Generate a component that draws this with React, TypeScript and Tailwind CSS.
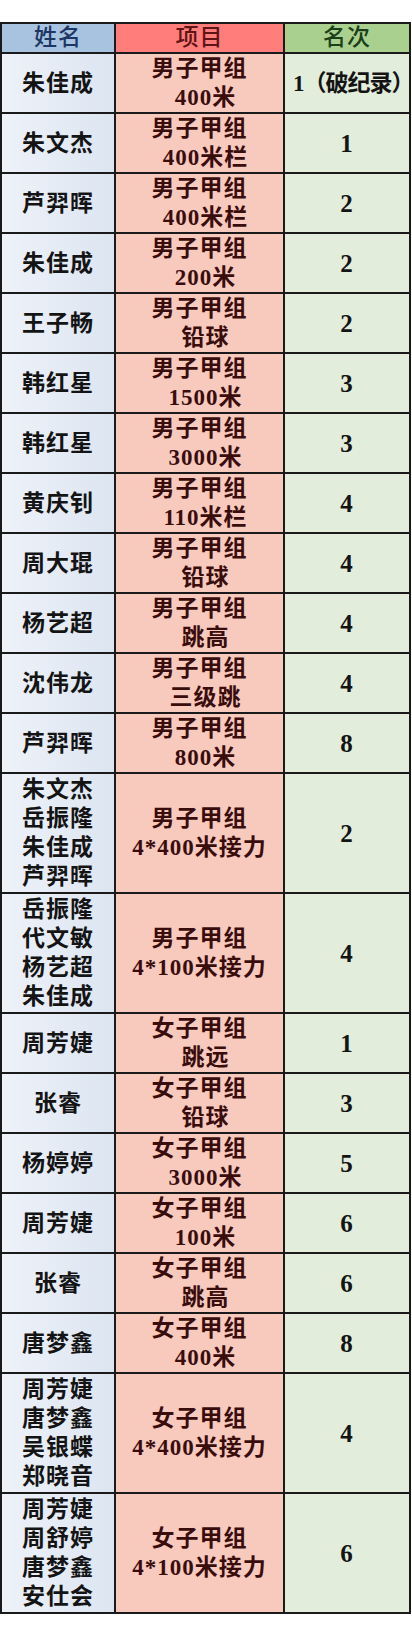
type Row = { names: string[]; group: string; event: string; rank: string };

const rows: Row[] = [
  { names: ['朱佳成'], group: '男子甲组', event: '400米', rank: '1（破纪录）' },
  { names: ['朱文杰'], group: '男子甲组', event: '400米栏', rank: '1' },
  { names: ['芦羿晖'], group: '男子甲组', event: '400米栏', rank: '2' },
  { names: ['朱佳成'], group: '男子甲组', event: '200米', rank: '2' },
  { names: ['王子畅'], group: '男子甲组', event: '铅球', rank: '2' },
  { names: ['韩红星'], group: '男子甲组', event: '1500米', rank: '3' },
  { names: ['韩红星'], group: '男子甲组', event: '3000米', rank: '3' },
  { names: ['黄庆钊'], group: '男子甲组', event: '110米栏', rank: '4' },
  { names: ['周大琨'], group: '男子甲组', event: '铅球', rank: '4' },
  { names: ['杨艺超'], group: '男子甲组', event: '跳高', rank: '4' },
  { names: ['沈伟龙'], group: '男子甲组', event: '三级跳', rank: '4' },
  { names: ['芦羿晖'], group: '男子甲组', event: '800米', rank: '8' },
  { names: ['朱文杰', '岳振隆', '朱佳成', '芦羿晖'], group: '男子甲组', event: '4*400米接力', rank: '2' },
  { names: ['岳振隆', '代文敏', '杨艺超', '朱佳成'], group: '男子甲组', event: '4*100米接力', rank: '4' },
  { names: ['周芳婕'], group: '女子甲组', event: '跳远', rank: '1' },
  { names: ['张睿'], group: '女子甲组', event: '铅球', rank: '3' },
  { names: ['杨婷婷'], group: '女子甲组', event: '3000米', rank: '5' },
  { names: ['周芳婕'], group: '女子甲组', event: '100米', rank: '6' },
  { names: ['张睿'], group: '女子甲组', event: '跳高', rank: '6' },
  { names: ['唐梦鑫'], group: '女子甲组', event: '400米', rank: '8' },
  { names: ['周芳婕', '唐梦鑫', '吴银蝶', '郑晓音'], group: '女子甲组', event: '4*400米接力', rank: '4' },
  { names: ['周芳婕', '周舒婷', '唐梦鑫', '安仕会'], group: '女子甲组', event: '4*100米接力', rank: '6' },
];

export default function App() {
  return (
    <div
      className="min-h-[1631px] w-[412px] bg-white pt-[22px] font-bold"
      style={{ fontFamily: '"Liberation Serif", "Noto Sans CJK SC", serif' }}
    >
      <div className="w-[411px] border-l-2 border-t-2 border-[#1a1a1a]">
        <div className="grid h-[30px] grid-cols-[114px_169px_126px] border-b-2 border-[#1a1a1a] text-[23px] font-medium leading-[28px] tracking-[1px]">
          <div className="flex items-center justify-center border-r-2 border-[#1a1a1a] bg-[#a8c3df] text-[#1d3664]">姓名</div>
          <div className="flex items-center justify-center border-r-2 border-[#1a1a1a] bg-[#ff7d7a] text-[#5e1414]">项目</div>
          <div className="flex items-center justify-center border-r-2 border-[#1a1a1a] bg-[#aad08f] text-[#1b4019]">名次</div>
        </div>
        {rows.map((r, i) => {
          const tall = r.names.length > 1;
          return (
            <div
              key={i}
              className={`grid grid-cols-[114px_169px_126px] border-b-2 border-[#1a1a1a] text-[23px] leading-[29px] tracking-[1px] ${tall ? 'h-[120px]' : 'h-[60px]'}`}
            >
              <div className="flex flex-col items-center justify-center border-r-2 border-[#1a1a1a] bg-gradient-to-r from-[#eef2f9] to-[#dce5f1] text-[#141414]">
                {r.names.map((n, j) => (
                  <span key={j}>{n}</span>
                ))}
              </div>
              <div className="flex flex-col items-center justify-center border-r-2 border-[#1a1a1a] bg-[#f8c9bd] text-[#3a0d0d]">
                <span>{r.group}</span>
                <span className={tall ? '' : 'pl-3'}>{r.event}</span>
              </div>
              <div className="flex items-center justify-center border-r-2 border-[#1a1a1a] bg-[#e2eddb] text-[#141414]">
                {r.rank.length > 2 ? (
                  <span className="pl-2 tracking-[-1px]">{r.rank}</span>
                ) : (
                  <span className="text-[25px]">{r.rank}</span>
                )}
              </div>
            </div>
          );
        })}
      </div>
    </div>
  );
}
